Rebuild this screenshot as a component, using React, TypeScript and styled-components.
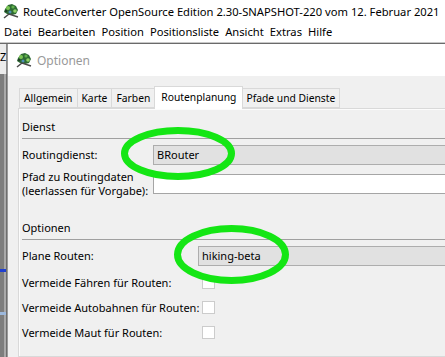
import styled, { createGlobalStyle } from "styled-components";

const GlobalStyle = createGlobalStyle`
  html, body {
    margin: 0;
    padding: 0;
    background: #f0f0f0;
    overflow: hidden;
  }
  body {
    font-family: "Noto Sans", "Open Sans", "DejaVu Sans", sans-serif;
    font-size: 11px;
    color: #000;
  }
`;

const Screen = styled.div`
  position: relative;
  width: 445px;
  height: 357px;
  overflow: hidden;
  display: flex;
  flex-direction: column;
`;

const TitleBar = styled.div`
  height: 22px;
  flex-shrink: 0;
  background: #fff;
  display: flex;
  align-items: center;
  gap: 4px;
  padding-left: 3px;
  white-space: nowrap;
  font-size: 11.2px;
`;

const MenuBar = styled.div`
  height: 20px;
  flex-shrink: 0;
  background: #fff;
  display: flex;
  align-items: center;
  gap: 6px;
  padding-left: 4px;
  border-bottom: 1px solid #c8c8c8;
  white-space: nowrap;
  font-size: 11.2px;
`;

const MenuItem = styled.span`
  line-height: 20px;
`;

const Workspace = styled.div`
  flex: 1;
  display: flex;
  border-top: 1px solid #6a6a6a;
  min-height: 0;
`;

const MainStrip = styled.div`
  width: 7px;
  flex-shrink: 0;
  display: flex;
  flex-direction: column;
  background: linear-gradient(to right, #7d7d7d 0 4px, #a9a9a9 4px 6px, #6e6e6e 6px);
`;

const StripTop = styled.div`
  height: 30px;
  flex-shrink: 0;
  background: #ececec;
  font-size: 11px;
  line-height: 26px;
  border-right: 1px solid #8a8a8a;
`;

const StripMark = styled.div<{ $top: number; $color: string }>`
  height: 3px;
  width: 6px;
  flex-shrink: 0;
  margin-top: ${(p) => p.$top}px;
  background: ${(p) => p.$color};
`;

const Dialog = styled.div`
  width: 600px;
  flex-shrink: 0;
  display: flex;
  flex-direction: column;
  border-left: 1px solid #9a9a9a;
  min-height: 0;
`;

const DialogTitle = styled.div`
  height: 32px;
  flex-shrink: 0;
  background: #fff;
  display: flex;
  align-items: center;
  gap: 5px;
  padding-left: 8px;
  color: #999;
  font-size: 12px;
`;

const DialogBody = styled.div`
  flex: 1;
  min-height: 0;
  overflow: hidden;
  display: flex;
  flex-direction: column;
  background: #f0f0f0;
  padding: 10px 0 0 10px;
`;

const TabRow = styled.div`
  display: flex;
  align-items: flex-end;
  flex-shrink: 0;
  padding-left: 2px;
  height: 22px;
  position: relative;
  z-index: 1;
`;

const Tab = styled.div<{ $active?: boolean }>`
  height: ${(p) => (p.$active ? 23 : 20)}px;
  line-height: ${(p) => (p.$active ? 20 : 18)}px;
  padding: 0 ${(p) => (p.$active ? 6 : 4)}px;
  margin: 0 ${(p) => (p.$active ? -1 : 0)}px ${(p) => (p.$active ? -1 : 0)}px -1px;
  background: ${(p) => (p.$active ? "#fff" : "#f0f0f0")};
  border: 1px solid #d9d9d9;
  border-bottom: ${(p) => (p.$active ? "none" : "1px solid #d9d9d9")};
  box-sizing: border-box;
  white-space: nowrap;
  font-size: 10.3px;
  position: relative;
  z-index: ${(p) => (p.$active ? 2 : 1)};
`;

const Panel = styled.div`
  flex: 1;
  border: 1px solid #d9d9d9;
  background: #fcfcfc;
  padding: 1px 0 0 1px;
`;

const PanelInner = styled.div`
  background: #f0f0f0;
  height: 100%;
  padding-left: 2px;
`;

const SectionHeader = styled.div<{ $top: number }>`
  padding-top: ${(p) => p.$top}px;
  padding-bottom: 4px;
  line-height: 15px;
  border-bottom: 1px solid #a0a0a0;
`;

const FormGrid = styled.div<{ $labelWidth: number }>`
  display: grid;
  grid-template-columns: ${(p) => p.$labelWidth}px 1fr;
  align-items: center;
`;

const Label = styled.div<{ $top?: number }>`
  margin-top: ${(p) => p.$top ?? 0}px;
  line-height: 14px;
  white-space: nowrap;
`;

const Combo = styled.div<{ $top: number }>`
  margin-top: ${(p) => p.$top}px;
  height: 20px;
  box-sizing: border-box;
  background: #e1e1e1;
  border: 1px solid #adadad;
  padding-left: 3px;
  line-height: 18px;
`;

const TextField = styled.div<{ $top: number }>`
  margin-top: ${(p) => p.$top}px;
  height: 20px;
  box-sizing: border-box;
  background: #fff;
  border: 1px solid #a5a5a5;
`;

const CheckRows = styled.div`
  margin-top: 4px;
`;

const CheckRow = styled.div`
  height: 25px;
  display: grid;
  grid-template-columns: 180px 13px;
  align-items: center;
`;

const CheckBox = styled.div`
  width: 13px;
  height: 13px;
  box-sizing: border-box;
  background: #fff;
  border: 1px solid #cccccc;
`;

const Marks = styled.svg`
  position: absolute;
  left: 0;
  top: 0;
  pointer-events: none;
`;

function AppIcon() {
  return (
    <svg width="16" height="16" viewBox="0 0 16 16">
      <path d="M2 6 L5 2 L9 1 L13 3 L15 7 L13 11 L9 12 L4 11 L1 9Z" fill="#2e6b34" />
      <circle cx="5" cy="5" r="2" fill="#7cc654" />
      <circle cx="10" cy="4" r="1.6" fill="#5fb04a" />
      <circle cx="12" cy="8" r="1.8" fill="#8fd266" />
      <circle cx="7" cy="9" r="1.5" fill="#4e8fb8" />
      <circle cx="3" cy="8" r="1.2" fill="#1f3f24" />
      <path d="M1 15 L6 11 L15 14" stroke="#4a4a4a" strokeWidth="1.5" fill="none" />
    </svg>
  );
}

const tabs = ["Allgemein", "Karte", "Farben", "Routenplanung", "Pfade und Dienste"];
const menus = ["Datei", "Bearbeiten", "Position", "Positionsliste", "Ansicht", "Extras", "Hilfe"];
const avoids = [
  "Vermeide Fähren für Routen:",
  "Vermeide Autobahnen für Routen:",
  "Vermeide Maut für Routen:",
];

function App() {
  return (
    <>
      <GlobalStyle />
      <Screen>
        <TitleBar>
          <AppIcon />
          <span>RouteConverter OpenSource Edition 2.30-SNAPSHOT-220 vom 12. Februar 2021</span>
        </TitleBar>
        <MenuBar>
          {menus.map((m) => (
            <MenuItem key={m}>{m}</MenuItem>
          ))}
        </MenuBar>
        <Workspace>
          <MainStrip>
            <StripTop>Z</StripTop>
            <StripMark $top={195} $color="#1f3fd0" />
            <StripMark $top={40} $color="#9cb8dc" />
          </MainStrip>
          <Dialog>
            <DialogTitle>
              <AppIcon />
              <span>Optionen</span>
            </DialogTitle>
            <DialogBody>
              <TabRow>
                {tabs.map((t) => (
                  <Tab key={t} $active={t === "Routenplanung"}>
                    {t}
                  </Tab>
                ))}
              </TabRow>
              <Panel>
                <PanelInner>
                  <SectionHeader $top={9}>Dienst</SectionHeader>
                  <FormGrid $labelWidth={131}>
                    <Label $top={6}>Routingdienst:</Label>
                    <Combo $top={6}>BRouter</Combo>
                    <Label $top={5}>
                      Pfad zu Routingdaten
                      <br />
                      (leerlassen für Vorgabe):
                    </Label>
                    <TextField $top={5} />
                  </FormGrid>
                  <SectionHeader $top={22}>Optionen</SectionHeader>
                  <FormGrid $labelWidth={176}>
                    <Label $top={6}>Plane Routen:</Label>
                    <Combo $top={6}>hiking-beta</Combo>
                  </FormGrid>
                  <CheckRows>
                    {avoids.map((a) => (
                      <CheckRow key={a}>
                        <Label>{a}</Label>
                        <CheckBox />
                      </CheckRow>
                    ))}
                  </CheckRows>
                </PanelInner>
              </Panel>
            </DialogBody>
          </Dialog>
        </Workspace>
        <Marks width="445" height="357" viewBox="0 0 445 357">
          <ellipse cx="178" cy="153.5" rx="53.5" ry="23" fill="none" stroke="#14e614" strokeWidth="7" />
          <ellipse cx="231.5" cy="254.5" rx="54" ry="26" fill="none" stroke="#14e614" strokeWidth="7" />
        </Marks>
      </Screen>
    </>
  );
}

export default App;
